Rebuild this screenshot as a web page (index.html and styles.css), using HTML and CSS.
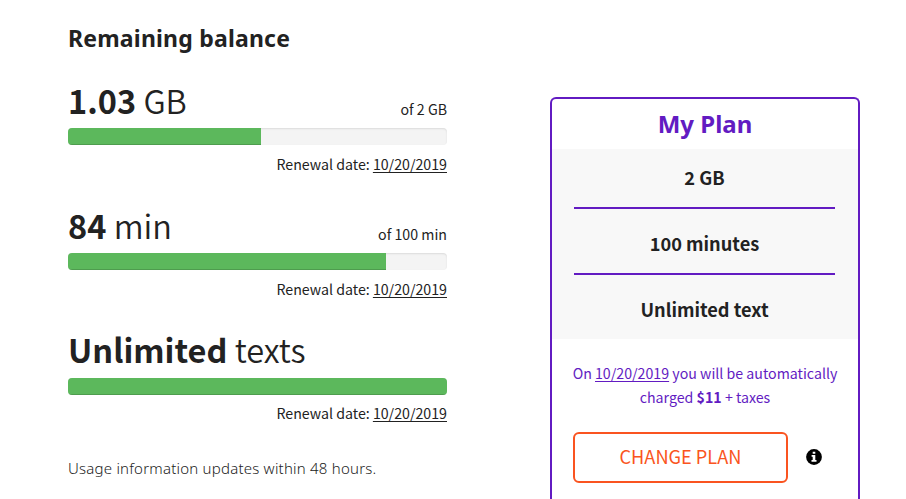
FILE: index.html
```html
<!DOCTYPE html>
<html lang="en">
<head>
    <meta charset="UTF-8">
    <meta name="viewport" content="width=device-width, initial-scale=1.0">
    <title>My Account - Remaining balance</title>
    <link rel="stylesheet" href="styles.css">
</head>
<body>
    <div class="account">
        <section class="balance">
            <h2>Remaining balance</h2>

            <div class="usage">
                <div class="usage-head">
                    <div class="amount"><strong>1.03</strong> <span class="unit">GB</span></div>
                    <div class="total">of 2 GB</div>
                </div>
                <div class="progress"><div class="progress-bar" style="width: 51%"></div></div>
                <p class="renewal">Renewal date: <u>10/20/2019</u></p>
            </div>

            <div class="usage">
                <div class="usage-head">
                    <div class="amount"><strong>84</strong> <span class="unit">min</span></div>
                    <div class="total">of 100 min</div>
                </div>
                <div class="progress"><div class="progress-bar" style="width: 84%"></div></div>
                <p class="renewal">Renewal date: <u>10/20/2019</u></p>
            </div>

            <div class="usage">
                <div class="usage-head">
                    <div class="amount"><strong>Unlimited</strong> <span class="unit">texts</span></div>
                </div>
                <div class="progress"><div class="progress-bar" style="width: 100%"></div></div>
                <p class="renewal">Renewal date: <u>10/20/2019</u></p>
            </div>

            <p class="usage-note">Usage information updates within 48 hours.</p>
        </section>

        <section class="plan">
            <h2>My Plan</h2>
            <ul class="plan-features">
                <li>2 GB</li>
                <li>100 minutes</li>
                <li>Unlimited text</li>
            </ul>
            <p class="charge">
                <span class="charge-line">On <u>10/20/2019</u> you will be automatically</span>
                <span class="charge-line">charged <strong>$11</strong> + taxes</span>
            </p>
            <div class="plan-actions">
                <button type="button">CHANGE PLAN</button>
                <svg class="info" viewBox="0 0 16 16" width="16" height="16">
                    <circle cx="8" cy="8" r="7.9" fill="#000"/>
                    <path d="M6.7 2.7h2.6v2.1H6.7zM5.6 6h3.7v4.9h1.2v1.8h-5v-1.8h1.2V7.7H5.6z" fill="#fff"/>
                </svg>
            </div>
        </section>
    </div>
</body>
</html>
```
FILE: styles.css
```css
* {
    box-sizing: border-box;
}
body {
    font-family: "Noto Sans CJK SC", "Noto Sans", sans-serif;
    font-size: 14.2px;
    margin: 0;
    color: #222;
    background-color: #fff;
}
h2, p, ul {
    margin: 0;
    padding: 0;
}
h2 {
    font-family: "Noto Sans", sans-serif;
    font-size: 23px;
    line-height: 30px;
    font-weight: 700;
    letter-spacing: 0.2px;
    white-space: nowrap;
}
u {
    text-underline-offset: 2px;
}
.account {
    display: flex;
    align-items: flex-start;
    gap: 103px;
    padding-left: 68px;
}
.balance {
    width: 379px;
    padding-top: 23px;
}
.balance h2 {
    margin-bottom: 25px;
}
.usage {
    height: 125px;
}
.usage-head {
    display: flex;
    justify-content: space-between;
    align-items: flex-end;
    height: 50px;
}
.amount {
    font-size: 32.5px;
    line-height: 50px;
    padding-bottom: 3px;
    white-space: nowrap;
}
.unit {
    font-weight: 350;
}
.total {
    line-height: 24px;
    padding-bottom: 7px;
}
.progress {
    height: 17px;
    border-radius: 4px;
    overflow: hidden;
    background-color: #f4f4f4;
    box-shadow: inset 0 1px 2px rgba(0, 0, 0, 0.1);
}
.progress-bar {
    height: 100%;
    background-color: #5cb85c;
    box-shadow: inset 0 -1px 0 rgba(0, 0, 0, 0.15);
}
.renewal {
    line-height: 24px;
    padding-top: 7px;
    text-align: right;
}
.usage:last-of-type .amount {
    padding-bottom: 4px;
}
.usage:last-of-type .renewal {
    padding-top: 6px;
}
.usage-note {
    font-family: "Noto Sans", sans-serif;
    font-weight: 300;
    font-size: 15px;
    line-height: 24px;
    letter-spacing: 0.22px;
    padding-top: 3px;
    white-space: nowrap;
}
.plan {
    width: 310px;
    height: 402px;
    margin-top: 97px;
    border: 2px solid #621bc2;
    border-bottom: none;
    border-radius: 6px 6px 0 0;
    text-align: center;
}
.plan h2 {
    color: #621bc2;
    line-height: 50px;
    font-size: 24px;
    letter-spacing: 0;
}
.plan-features {
    list-style: none;
    height: 190px;
    padding: 0 23px 0 22px;
    background-color: #f8f8f8;
}
.plan-features li {
    height: 66px;
    line-height: 69px;
    font-size: 18.2px;
    font-weight: 700;
    border-bottom: 2px solid #621bc2;
}
.plan-features li:first-child {
    height: 60px;
    line-height: 57px;
}
.plan-features li:last-child {
    height: 64px;
    border-bottom: none;
}
.charge {
    color: #621bc2;
    padding-top: 22px;
    line-height: 24px;
}
.charge-line {
    display: block;
    white-space: nowrap;
}
.plan-actions {
    display: flex;
    align-items: center;
    gap: 18px;
    padding: 23px 0 0 21px;
}
button {
    width: 215px;
    height: 51px;
    padding: 0 0 3px;
    border: 2px solid #fa5420;
    border-radius: 6px;
    background-color: #fff;
    color: #fa5420;
    font-family: inherit;
    font-size: 18.2px;
    cursor: pointer;
}
.info {
    margin-bottom: 1px;
}
```
